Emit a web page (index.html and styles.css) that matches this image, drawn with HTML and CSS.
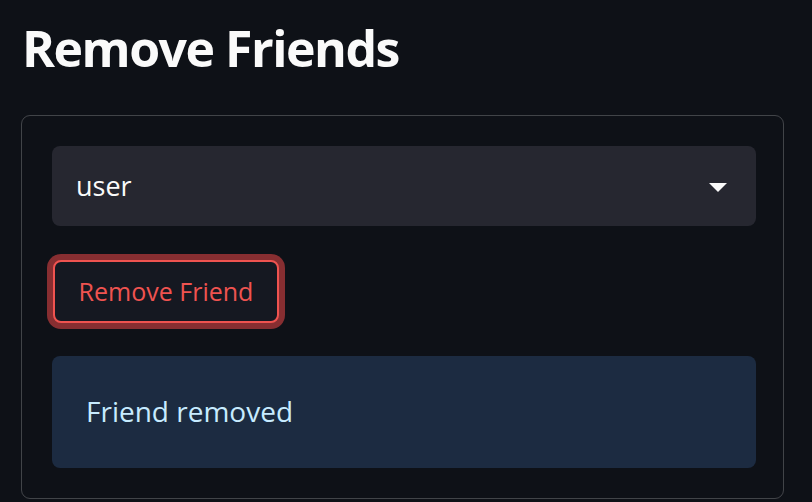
FILE: index.html
```html
<!DOCTYPE html>
<html lang="en">
<head>
<meta charset="utf-8">
<title>Remove Friends</title>
<link rel="stylesheet" href="styles.css">
</head>
<body>
<main class="page">
  <h1 class="title">Remove Friends</h1>
  <section class="form">
    <div class="select">
      <span class="select-value">user</span>
      <svg class="select-arrow" width="18" height="9" viewBox="0 0 18 9" aria-hidden="true"><path d="M0 0H18L9 9Z" fill="#fafafa"/></svg>
    </div>
    <div class="button-row">
      <button class="btn-remove" type="button">Remove Friend</button>
    </div>
    <div class="alert">Friend removed</div>
  </section>
</main>
</body>
</html>
```

FILE: styles.css
```css
* { box-sizing: border-box; }
html, body {
  margin: 0;
  background: #0e1117;
  height: 100%;
  overflow: hidden;
}
body {
  font-family: "Open Sans", "Noto Sans", sans-serif;
  color: #fafafa;
}
.page {
  padding: 0 28px 0 21px;
}
.title {
  margin: 0;
  padding: 13px 0 0 1px;
  height: 115px;
  font-size: 50px;
  line-height: 70px;
  font-weight: 700;
  letter-spacing: -1.5px;
  color: #fafafa;
}
.form {
  width: 763px;
  height: 384px;
  border: 1px solid rgba(250, 250, 250, 0.22);
  border-radius: 9px;
  padding: 30px 27px 29px 30px;
  display: flex;
  flex-direction: column;
}
.select {
  height: 80px;
  background: #262730;
  border-radius: 8px;
  display: flex;
  align-items: center;
  justify-content: space-between;
  padding: 0 29px 0 24px;
}
.select-value {
  font-size: 27px;
  color: #fafafa;
  padding-bottom: 2px;
}
.select-arrow { display: block; margin-top: 2px; }
.button-row {
  display: flex;
  padding: 34px 0 33px 1px;
}
.btn-remove {
  width: 226px;
  height: 63px;
  background: #151821;
  border: 2px solid #ef5350;
  border-radius: 8px;
  box-shadow: 0 0 0 6px rgba(255, 75, 75, 0.5);
  color: #ef5350;
  font-family: inherit;
  font-size: 25px;
  padding: 0 0 2px 0;
  cursor: pointer;
}
.alert {
  height: 112px;
  background: #1c2b41;
  border-radius: 8px;
  display: flex;
  align-items: center;
  padding: 0 0 2px 34px;
  color: #c7ebff;
  font-size: 28px;
}
```
